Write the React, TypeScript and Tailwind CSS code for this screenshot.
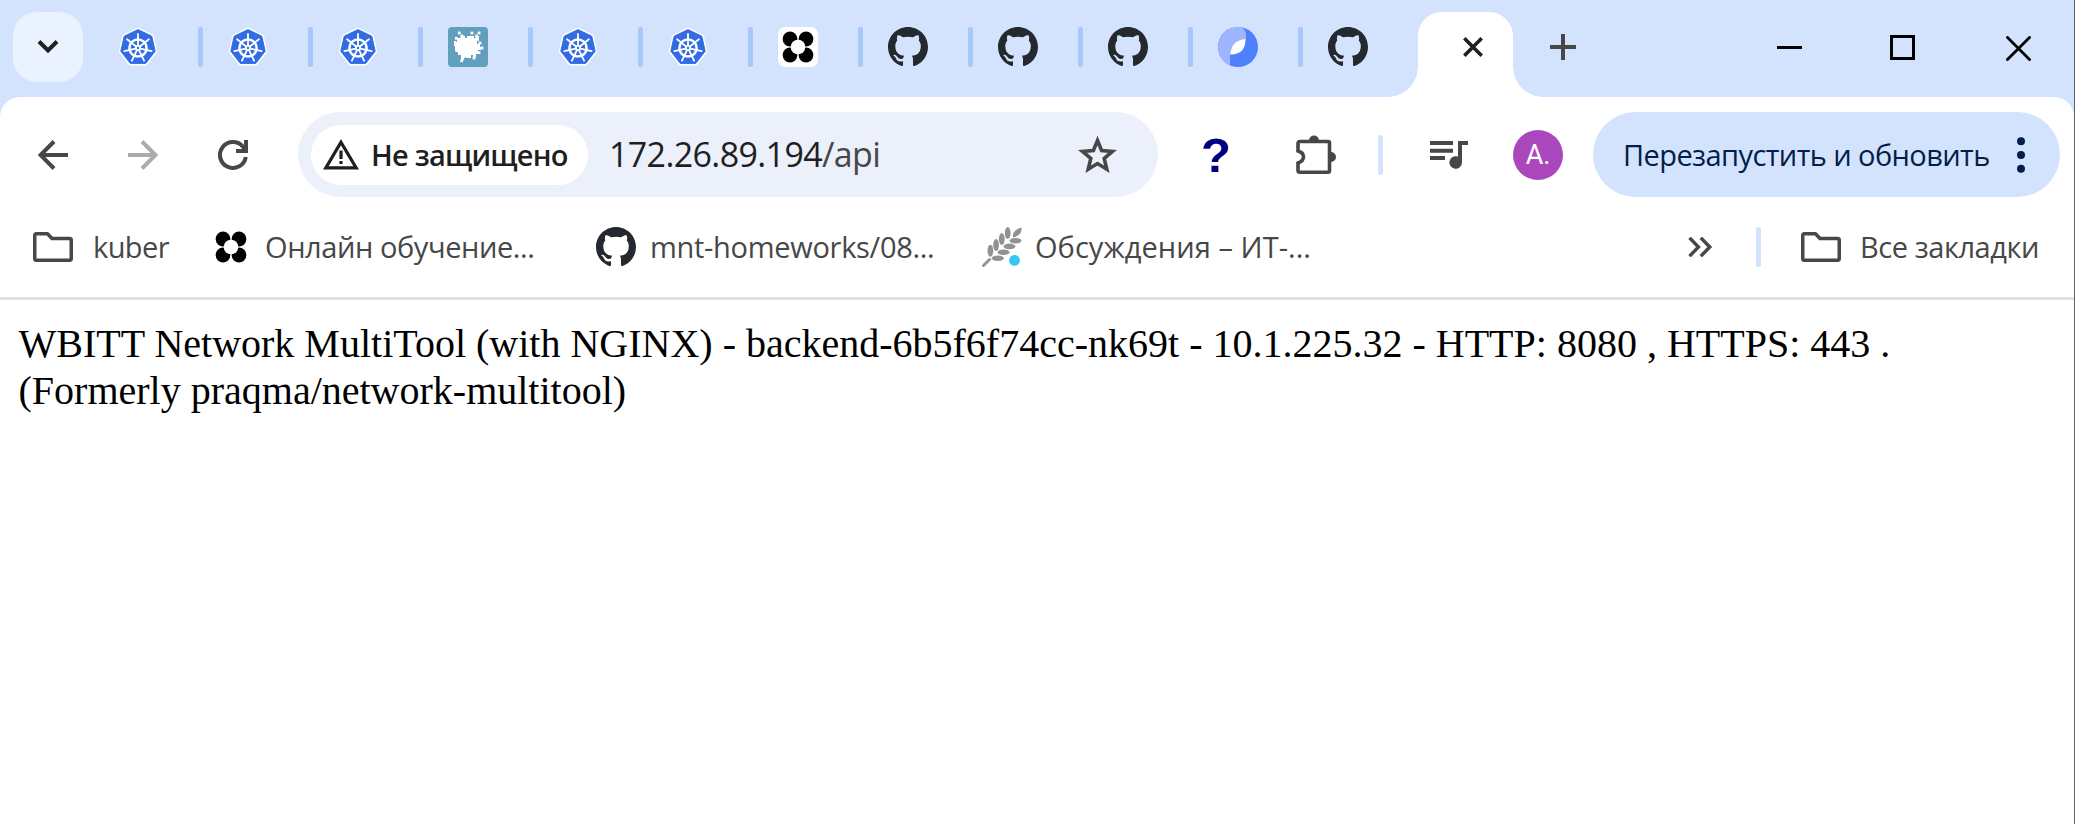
import React from "react";

const FONT = "font-['Open_Sans','Noto_Sans',sans-serif]";

function Kubernetes() {
  const hept = "M20 2.6 L33.8 9.2 L37.2 24.2 L27.7 36.4 H12.3 L2.8 24.2 L6.2 9.2 Z";
  return (
    <svg className="size-10 shrink-0" viewBox="0 0 40 40">
      <path d={hept} fill="#fff" stroke="#fff" strokeWidth="4" strokeLinejoin="round" />
      <path d={hept} fill="#326ce5" stroke="#326ce5" strokeWidth="1" strokeLinejoin="round" />
      <circle cx="20" cy="21" r="8.6" fill="none" stroke="#fff" strokeWidth="2.5" />
      {[0, 1, 2, 3, 4, 5, 6].map((i) => (
        <path key={i} d="M20 18.6 V7" transform={`rotate(${(i * 360) / 7} 20 21)`} stroke="#fff" strokeWidth="1.8" strokeLinecap="round" />
      ))}
      <circle cx="20" cy="21" r="3" fill="#fff" />
      <circle cx="20" cy="21" r="1.2" fill="#326ce5" />
    </svg>
  );
}

function Splat() {
  const dots = [
    [11.3, 6], [8.3, 11.3], [24, 6], [31, 6], [8.7, 23.7], [8.3, 16.3], [34, 21],
    [32, 16], [13.7, 33.7], [26, 31], [15.7, 29.7], [31, 25.7], [28.5, 9], [14, 9],
  ];
  return (
    <svg className="size-10 shrink-0" viewBox="0 0 40 40">
      <rect width="40" height="40" rx="4" fill="#629fbd" />
      <path
        d="M13 9h4v2h2v-2h7v2h2v-2h3v5h-2v3h3v3h1v3h-3v2h1v2h-3v3h-3v-2h-2v3h-5v-1h-2v3h-3v-5h-3v-3h-2v-2h-1v-4h-1v-5h2v2h1v-5h3z"
        fill="#fff"
      />
      {dots.map(([x, y], i) => (
        <rect key={i} x={x - 1.4} y={y - 1.4} width="2.8" height="2.8" fill="#fff" />
      ))}
    </svg>
  );
}

function Clover({ tile = false }: { tile?: boolean }) {
  return (
    <svg className="size-10 shrink-0" viewBox="0 0 40 40">
      {tile && <rect width="40" height="40" rx="7" fill="#fff" />}
      {[12, 28].map((x) => [12, 28].map((y) => <circle key={`${x}-${y}`} cx={x} cy={y} r="7.4" fill="#000" />))}
      <circle cx="20" cy="20" r="7.3" fill="#fff" />
    </svg>
  );
}

function GitHub() {
  return (
    <svg className="size-10 shrink-0" viewBox="0 0 16 16" fill="#24292f">
      <path d="M8 0C3.58 0 0 3.58 0 8c0 3.54 2.29 6.53 5.47 7.59.4.07.55-.17.55-.38 0-.19-.01-.82-.01-1.49-2.01.37-2.53-.49-2.69-.94-.09-.23-.48-.94-.82-1.13-.28-.15-.68-.52-.01-.53.63-.01 1.08.58 1.23.82.72 1.21 1.87.87 2.33.66.07-.52.28-.87.51-1.07-1.78-.2-3.64-.89-3.64-3.95 0-.87.31-1.59.82-2.15-.08-.2-.36-1.02.08-2.12 0 0 .67-.21 2.2.82.64-.18 1.32-.27 2-.27s1.36.09 2 .27c1.53-1.04 2.2-.82 2.2-.82.44 1.1.16 1.92.08 2.12.51.56.82 1.27.82 2.15 0 3.07-1.87 3.75-3.65 3.95.29.25.54.73.54 1.48 0 1.07-.01 1.93-.01 2.2 0 .21.15.46.55.38A8.01 8.01 0 0 0 16 8c0-4.42-3.58-8-8-8z" />
    </svg>
  );
}

function BlueLeaf() {
  return (
    <svg className="size-10 shrink-0" viewBox="0 0 40 40">
      <circle cx="20" cy="20" r="20" fill="#4f80ff" />
      <path d="M20 0C24.500 0 28 3 28 8V12L12 28V38.300A20 20 0 0 1 20 0Z" fill="#9db6ff" />
      <path d="M27.500 12C27.500 21 24 27.500 12.300 27.500C13 19 17 13 27.500 12Z" fill="#fff" />
    </svg>
  );
}

function Wheat() {
  return (
    <svg className="size-10 shrink-0" viewBox="0 0 40 40" fill="#929292">
      <path d="M1.500 38.500L7.500 32.500" stroke="#929292" strokeWidth="3" strokeLinecap="round" />
      {[[8.4, 23.7], [14.1, 17.9], [19.8, 12], [25.7, 6]].map(([x, y], i) => (
        <ellipse key={i} cx={x} cy={y} rx="2.9" ry="6" />
      ))}
      {[[33.5, 13.7], [27.5, 19.4], [21.5, 25.3], [15.8, 31.2]].map(([x, y], i) => (
        <ellipse key={i} cx={x} cy={y} rx="6" ry="2.8" />
      ))}
      <path d="M39.500 .5C33 2 30 6 31 10.500C37 9 40 6 39.500 .5Z" />
      <circle cx="32.500" cy="33.400" r="5.400" fill="#36c6f4" />
    </svg>
  );
}

function Folder() {
  return (
    <svg className="h-[30px] w-10 shrink-0" viewBox="0 0 40 30" fill="none" stroke="#474747" strokeWidth="3.500" strokeLinejoin="round">
      <path d="M3.500 1.750H14.500L19 6.500H36.500Q38.250 6.500 38.250 8.200V26.500Q38.250 28.250 36.500 28.250H3.500Q1.750 28.250 1.750 26.500V3.500Q1.750 1.750 3.500 1.750Z" />
    </svg>
  );
}

const tabs = [Kubernetes, Kubernetes, Kubernetes, Splat, Kubernetes, Kubernetes, () => <Clover tile />, GitHub, GitHub, GitHub, BlueLeaf, GitHub];

function TabStrip() {
  return (
    <div className="flex h-[97px] items-start pl-[13px]">
      <button className="mt-3 flex size-[70px] items-center justify-center rounded-[24px] bg-[#ebf2ff]">
        <svg className="size-[30px]" viewBox="0 0 30 30" fill="none" stroke="#1f1f1f" strokeWidth="4">
          <path d="M6 9.500L15 18.500L24 9.500" />
        </svg>
      </button>
      <div className="mt-[27px] ml-[35px] flex items-center">
        {tabs.map((Icon, i) => (
          <React.Fragment key={i}>
            {i > 0 && <span className="mr-[25px] ml-10 h-10 w-[5px] rounded-[2px] bg-[#a8c7fa]" />}
            <Icon />
          </React.Fragment>
        ))}
      </div>
      <div className="relative mt-3 ml-[50px] flex h-[85px] w-[95px] justify-center rounded-t-[24px] bg-white pt-[25px] pl-[15px] before:absolute before:bottom-0 before:-left-[30px] before:size-[30px] before:bg-[radial-gradient(circle_at_0_0,transparent_29.5px,white_30px)] after:absolute after:-right-[30px] after:bottom-0 after:size-[30px] after:bg-[radial-gradient(circle_at_100%_0,transparent_29.5px,white_30px)]">
        <svg className="size-5" viewBox="0 0 20 20" stroke="#1f1f1f" strokeWidth="3.600">
          <path d="M1.300 1.300L18.700 18.700M18.700 1.300L1.300 18.700" />
        </svg>
      </div>
      <svg className="mt-[34px] ml-[37px] size-[26px]" viewBox="0 0 26 26" stroke="#474747" strokeWidth="4">
        <path d="M0 13H26M13 0V26" />
      </svg>
      <svg className="mt-[35px] ml-[201px] size-[25px]" viewBox="0 0 25 25" stroke="#000" strokeWidth="3">
        <path d="M0 12.500H25" />
      </svg>
      <svg className="mt-[35px] ml-[88px] size-[25px]" viewBox="0 0 25 25" fill="none" stroke="#000" strokeWidth="3">
        <path d="M1.500 1.500H23.500V23.500H1.500Z" />
      </svg>
      <svg className="mt-9 ml-[91px] size-[25px]" viewBox="0 0 25 25" stroke="#000" strokeWidth="2.800">
        <path d="M.5 .5L24.500 24.500M24.500 .5L.5 24.500" />
      </svg>
    </div>
  );
}

function Toolbar() {
  return (
    <div className="flex h-[115px] items-start pt-[15px] pl-[38px]">
      <div className="flex h-[85px] items-center">
        <svg className="size-[30px]" viewBox="0 0 30 30" fill="none" stroke="#474747" strokeWidth="4">
          <path d="M30 15H3M16 1.500L2.500 15L16 28.500" />
        </svg>
        <svg className="ml-[60px] size-[30px]" viewBox="0 0 30 30" fill="none" stroke="#ababab" strokeWidth="4">
          <path d="M0 15H27M14 1.500L27.500 15L14 28.500" />
        </svg>
        <svg className="ml-[60px] size-[30px]" viewBox="0 0 30 30" fill="none" stroke="#474747" strokeWidth="4">
          <path d="M27.800 17A13 13 0 1 1 25 6.700L28 10.500M28 0V11H18" />
        </svg>
      </div>
      <div className="ml-[50px] flex h-[85px] w-[860px] items-center rounded-full bg-[#ebf0fa] pr-[41px] pl-[13px]">
        <div className="flex h-[60px] w-[277px] items-center rounded-full bg-white pl-3">
          <svg className="h-[31px] w-9 shrink-0" viewBox="0 0 36 31" fill="none" stroke="#1f1f1f" strokeWidth="3.200">
            <path d="M18 3.200L33.200 28.900H2.800Z" />
            <path d="M18 11.500V20M18 22V25" />
          </svg>
          <span className="ml-3 text-[29px] font-semibold tracking-[-0.8px] whitespace-nowrap text-[#1f1f1f]">Не защищено</span>
        </div>
        <span className="ml-[21px] text-[34px] tracking-[-0.63px] whitespace-nowrap text-[#1f1f1f]">
          172.26.89.194<span className="text-[#474747]">/api</span>
        </span>
        <svg className="ml-auto h-[37px] w-[39px]" viewBox="0 0 39 37" fill="none" stroke="#474747" strokeWidth="3.600">
          <path d="M19.500 4.500L23.600 14.500L34.500 15.400L26.200 22.500L28.800 33.200L19.500 27.500L10.200 33.200L12.800 22.500L4.500 15.400L15.400 14.500Z" />
        </svg>
      </div>
      <div className="ml-[43px] flex h-[85px] items-center">
        <span className="w-[30px] pt-px text-center font-['Liberation_Sans',sans-serif] text-[49px] leading-none font-bold text-[#000080]">?</span>
        <svg className="ml-[65px] size-10" viewBox="0 0 40 40" fill="none" stroke="#474747" strokeWidth="3.600">
          <path d="M4 6.500H32Q33.500 6.500 33.500 8V35.500Q33.500 37.300 32 37.300H4Q2 37.300 2 35.500V28Q7.500 26 7.500 22Q7.500 17.500 2 16V8.500Q2 6.500 4 6.500Z" />
          <path d="M13 5.500A5 5 0 0 1 23 5.500ZM35 17A5 5 0 0 1 35 27Z" fill="#474747" stroke="none" />
        </svg>
        <span className="ml-[42px] h-10 w-[5px] rounded-full bg-[#d3e3fd]" />
        <svg className="ml-[47px] h-7 w-[38px]" viewBox="0 0 38 28" fill="#474747">
          <path d="M0 0H23V4H0ZM0 7.700H23V11.700H0ZM0 15H15V19H0ZM28 0H38V4H32V21.500A6.300 6.300 0 1 1 28 15.600Z" />
        </svg>
        <span className="ml-[45px] flex size-[50px] items-center justify-center rounded-full bg-[#ab47bc] pt-0.5 font-['Roboto',sans-serif] text-[27px] text-white">A.</span>
      </div>
      <button className="ml-[30px] flex h-[85px] w-[467px] items-center rounded-full bg-[#d3e3fd] pl-[30px]">
        <span className="text-[29px] tracking-[-0.58px] whitespace-nowrap text-[#041e49]">Перезапустить и обновить</span>
        <svg className="mr-[35px] ml-auto h-9 w-2" viewBox="0 0 8 36" fill="#041e49">
          <circle cx="4" cy="4.200" r="4" />
          <circle cx="4" cy="18" r="4" />
          <circle cx="4" cy="31.800" r="4" />
        </svg>
      </button>
    </div>
  );
}

function BookmarksBar() {
  return (
    <div className="flex h-[85px] items-center pb-[15px] pl-[33px] text-[29px] whitespace-nowrap text-[#474747]">
      <div className="flex w-[178px] items-center gap-5">
        <Folder />
        <span className="tracking-[-0.6px]">kuber</span>
      </div>
      <div className="flex w-[385px] items-center gap-[14px]">
        <Clover />
        <span className="tracking-[-0.42px]">Онлайн обучение...</span>
      </div>
      <div className="flex w-[386px] items-center gap-[14px]">
        <GitHub />
        <span className="tracking-[-0.3px]">mnt-homeworks/08...</span>
      </div>
      <div className="flex items-center gap-[13px]">
        <Wheat />
        <span className="tracking-[0.05px]">Обсуждения – ИТ-...</span>
      </div>
      <div className="ml-auto flex w-[386px] shrink-0 items-center">
        <svg className="h-5 w-[25px]" viewBox="0 0 25 20" fill="none" stroke="#474747" strokeWidth="3.400">
          <path d="M1.500 .8L10.500 10L1.500 19.200M12.800 .8L21.800 10L12.800 19.200" />
        </svg>
        <span className="ml-[43px] h-10 w-[5px] rounded-full bg-[#d3e3fd]" />
        <div className="ml-10 flex items-center gap-[19px]">
          <Folder />
          <span className="tracking-[-0.45px]">Все закладки</span>
        </div>
      </div>
    </div>
  );
}

export default function App() {
  return (
    <div className={`h-[824px] w-[2075px] overflow-hidden border-r border-[#5f6470] bg-[#d3e3fd] ${FONT}`}>
      <TabStrip />
      <div className="h-[727px] rounded-t-[20px] bg-white">
        <Toolbar />
        <BookmarksBar />
        <main className="border-t-[3px] border-[#e0e0e0] pt-[20px] pr-[18px] pl-[18.5px] font-['Liberation_Serif',serif] text-[40px] leading-[47px] text-black">
          WBITT Network MultiTool (with NGINX) - backend-6b5f6f74cc-nk69t - 10.1.225.32 - HTTP: 8080 , HTTPS: 443 .
          <br />
          (Formerly praqma/network-multitool)
        </main>
      </div>
    </div>
  );
}
